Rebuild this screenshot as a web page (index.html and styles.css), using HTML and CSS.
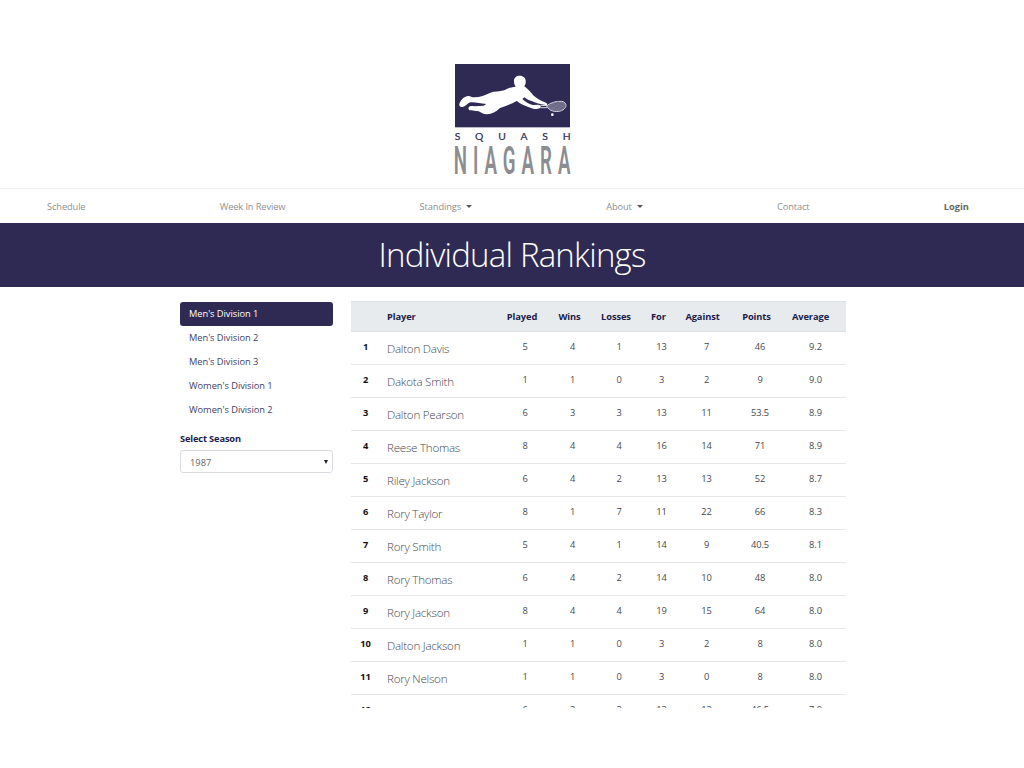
FILE: index.html
```html
<!DOCTYPE html>
<html lang="en">
<head>
<meta charset="utf-8">
<title>Squash Niagara - Individual Rankings</title>
<link rel="stylesheet" href="styles.css">
</head>
<body>
<div class="page">
<header class="brand">
<svg class="logo" viewBox="24 21 360 348" role="img" aria-label="Squash Niagara">
<rect x="30" y="27" width="345" height="190" fill="#2f2a53"/>
<path fill="#fff" d="M207 80 C206 69 213 62 224 62 C236 62 243 70 242 79 C243 85 240 90 238 94 C248 101 257 111 266 122 C278 132 291 139 303 143 C309 146 308 151 301 150 C287 148 268 142 249 134 L238 127 L232 132 C242 142 254 148 264 150 L279 149 C287 149 290 156 284 160 C275 164 265 162 256 158 C239 153 226 147 215 138 C200 147 182 153 165 159 C152 171 141 177 126 178 C114 178 109 172 101 169 C91 167 82 169 74 166 C68 163 70 153 78 153 C91 154 103 153 116 152 L124 147 C106 145 90 141 76 142 C66 146 61 155 52 156 C42 157 41 149 45 142 C50 132 58 124 69 123 C76 122 80 127 87 127 C106 126 120 121 136 113 C150 108 163 111 178 106 C190 98 199 97 212 95 C209 90 207 85 207 80 Z"/>
<path d="M286 151 L310 152 M286 158 L310 158" stroke="#d9d8e2" stroke-width="3" fill="none"/>
<path d="M305 153 C315 143 333 138 350 139 C362 141 366 150 361 158 C353 169 337 172 323 168 C315 166 310 161 305 153 Z" fill="#77748f" stroke="#d2d0dc" stroke-width="3"/>
<path d="M316 148 L350 167 M325 143 L358 161 M336 140 L362 154 M315 160 L342 140 M325 167 L356 143 M340 169 L362 150" stroke="#524e72" stroke-width="1"/>
<circle cx="322" cy="179" r="4" fill="#fff"/>
<text class="logo-top" x="29" y="255" textLength="348">SQUASH</text>
<text class="logo-name" transform="translate(26 357) scale(.48 1)" x="0" y="0" textLength="730">NIAGARA</text>
</svg>
</header>
<nav class="nav">
<a>Schedule</a><a>Week In Review</a><a class="drop">Standings</a><a class="drop">About</a><a>Contact</a><a class="login">Login</a>
</nav>
<div class="hero"><h1>Individual Rankings</h1></div>
<main class="main">
<aside class="side">
<ul class="pills"><li class="active">Men's Division 1</li><li>Men's Division 2</li><li>Men's Division 3</li><li>Women's Division 1</li><li>Women's Division 2</li></ul>
<div class="label">Select Season</div>
<div class="select"><span>1987</span><i class="arrow"></i></div>
</aside>
<table class="rank">
<colgroup><col class="c0"><col class="c1"><col class="c2"><col class="c3"><col class="c4"><col class="c5"><col class="c6"><col class="c7"><col class="c8"></colgroup>
<thead><tr><th></th><th class="name">Player</th><th>Played</th><th>Wins</th><th>Losses</th><th>For</th><th>Against</th><th>Points</th><th>Average</th></tr></thead>
<tbody>
<tr><th>1</th><td class="name">Dalton Davis</td><td>5</td><td>4</td><td>1</td><td>13</td><td>7</td><td>46</td><td>9.2</td></tr>
<tr><th>2</th><td class="name">Dakota Smith</td><td>1</td><td>1</td><td>0</td><td>3</td><td>2</td><td>9</td><td>9.0</td></tr>
<tr><th>3</th><td class="name">Dalton Pearson</td><td>6</td><td>3</td><td>3</td><td>13</td><td>11</td><td>53.5</td><td>8.9</td></tr>
<tr><th>4</th><td class="name">Reese Thomas</td><td>8</td><td>4</td><td>4</td><td>16</td><td>14</td><td>71</td><td>8.9</td></tr>
<tr><th>5</th><td class="name">Riley Jackson</td><td>6</td><td>4</td><td>2</td><td>13</td><td>13</td><td>52</td><td>8.7</td></tr>
<tr><th>6</th><td class="name">Rory Taylor</td><td>8</td><td>1</td><td>7</td><td>11</td><td>22</td><td>66</td><td>8.3</td></tr>
<tr><th>7</th><td class="name">Rory Smith</td><td>5</td><td>4</td><td>1</td><td>14</td><td>9</td><td>40.5</td><td>8.1</td></tr>
<tr><th>8</th><td class="name">Rory Thomas</td><td>6</td><td>4</td><td>2</td><td>14</td><td>10</td><td>48</td><td>8.0</td></tr>
<tr><th>9</th><td class="name">Rory Jackson</td><td>8</td><td>4</td><td>4</td><td>19</td><td>15</td><td>64</td><td>8.0</td></tr>
<tr><th>10</th><td class="name">Dalton Jackson</td><td>1</td><td>1</td><td>0</td><td>3</td><td>2</td><td>8</td><td>8.0</td></tr>
<tr><th>11</th><td class="name">Rory Nelson</td><td>1</td><td>1</td><td>0</td><td>3</td><td>0</td><td>8</td><td>8.0</td></tr>
<tr><th>12</th><td class="name">Harper Conrad</td><td>6</td><td>3</td><td>3</td><td>13</td><td>13</td><td>46.5</td><td>7.9</td></tr>
</tbody>
</table>
</main>
</div>
</body>
</html>
```
FILE: styles.css
```css
* { box-sizing: border-box; }
body { margin: 0; background: #fff; font-family: "Open Sans", "Noto Sans", sans-serif; font-size: 9.3px; color: #454a50; }
.page { height: 708px; overflow: hidden; }
.brand { height: 188px; padding-top: 62px; display: flex; justify-content: center; align-items: flex-start; }
.logo { width: 120px; height: 116px; margin-left: 2px; overflow: visible; }
.logo-top { font: 31px Lato, sans-serif; fill: #2f2a53; stroke: #2f2a53; stroke-width: .6px; }
.logo-name { font: 600 117px Roboto, sans-serif; fill: #8b8d90; }
.nav { height: 35px; border-top: 1px solid #f0f0f0; padding: 0 55px 0 47px; display: flex; justify-content: space-between; align-items: center; color: #8f8f8f; letter-spacing: -.12px; }
.drop::after { content: ""; display: inline-block; margin-left: 5px; vertical-align: 2px; border: 3px solid transparent; border-top-color: #555; border-bottom: 0; }
.login { font-weight: 700; color: #666; letter-spacing: 0; }
.hero { height: 64px; background: #2f2a53; display: flex; justify-content: center; }
h1 { margin: 0; color: #fff; font-size: 33px; font-weight: 300; line-height: 63px; letter-spacing: -.8px; }
.main { display: flex; padding: 14px 178px 0 180px; justify-content: space-between; align-items: flex-start; }
.side { width: 153px; padding-top: 1px; }
.pills { list-style: none; margin: 0; padding: 0; color: #45416a; letter-spacing: -.05px; }
.pills li { height: 24px; line-height: 24px; padding-left: 9px; }
.pills .active { background: #2f2a53; color: #fff; border-radius: 3px; }
.label { font-weight: 700; color: #201b4b; margin-top: 9px; line-height: 16px; letter-spacing: -.15px; }
.select { margin-top: 3px; height: 23px; border: 1px solid #d8dce0; border-radius: 3px; padding: 1px 4px 0 9px; display: flex; align-items: center; justify-content: space-between; color: #666; }
.arrow { border: 2px solid transparent; border-top: 4px solid #222; border-bottom: 0; }
.rank { width: 495px; table-layout: fixed; border-collapse: separate; border-spacing: 0; }
.c0 { width: 29px; } .c1 { width: 119px; } .c2 { width: 52px; } .c3 { width: 43px; } .c4 { width: 50px; } .c5 { width: 35px; } .c6 { width: 55px; } .c7 { width: 52px; } .c8 { width: 60px; }
.rank th, .rank td { padding: 0; text-align: center; vertical-align: top; }
.rank thead th { height: 31px; line-height: 29px; padding-right: 6px; background: #e8ebee; border-top: 1px solid #dee2e6; border-bottom: 1px solid #dce0e4; color: #201b4b; letter-spacing: -.1px; }
.rank thead th:nth-child(7) { padding-right: 8px; }
.rank thead th:nth-child(8) { padding-right: 7px; }
.rank thead th:last-child { padding-right: 11px; }
.rank tbody th, .rank tbody td { height: 33px; line-height: 29px; border-bottom: 1px solid #e5e7ea; letter-spacing: -.1px; }
.rank tbody td:last-child { padding-right: 1px; }
.rank tbody th { color: #111; }
.rank thead th.name, .rank tbody td.name { text-align: left; padding-left: 7px; padding-right: 0; }
.rank tbody td.name { font-size: 11.6px; font-weight: 300; line-height: 31px; padding-top: 1px; letter-spacing: -.24px; }
```
